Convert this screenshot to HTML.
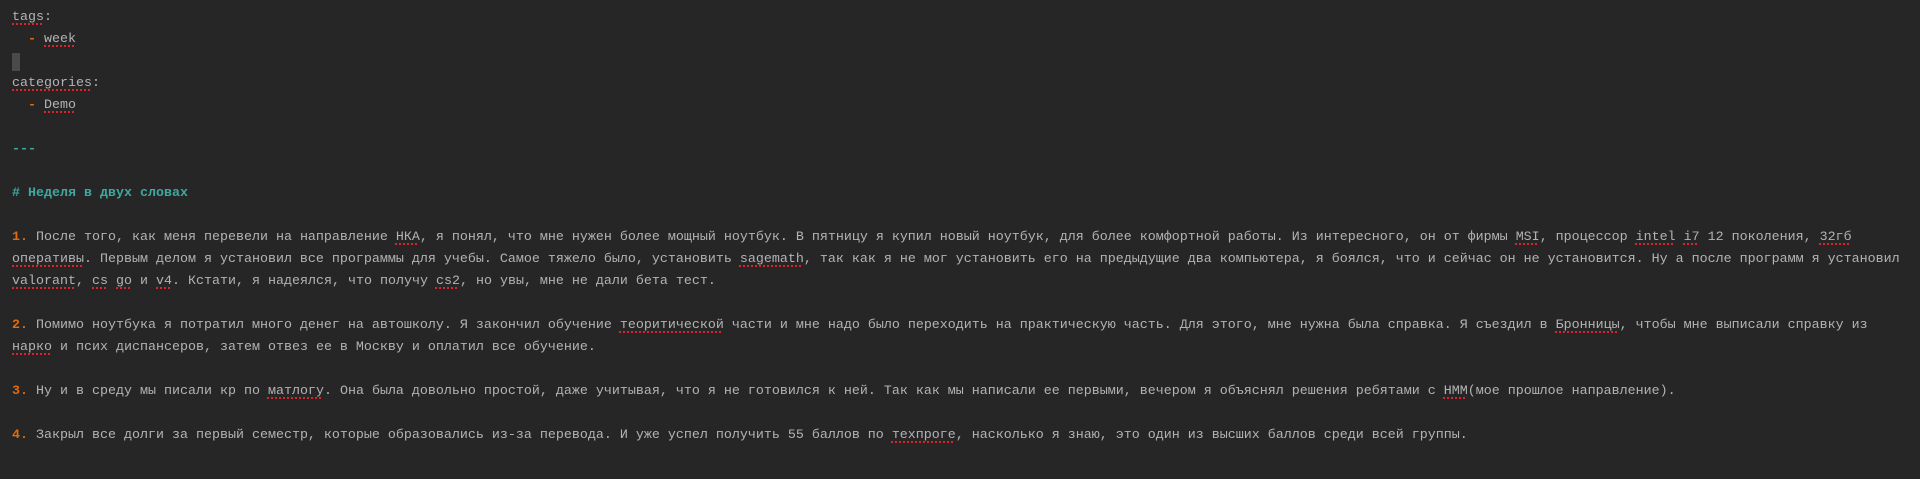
<!DOCTYPE html>
<html><head><meta charset="utf-8"><style>
html,body{margin:0;padding:0;background:#262626;width:1920px;height:479px;overflow:hidden}
pre{margin:0;padding:7px 0 0 12px;font-family:"Liberation Mono","DejaVu Sans Mono",monospace;font-size:13.333px;line-height:22px;color:#b3b3b3;white-space:pre}
.o{color:#e26a0a;font-weight:bold}
.t{color:#3ea8a0;font-weight:bold}
.s{text-decoration:underline dotted #e0202a;text-decoration-thickness:2px;text-underline-offset:3px}
.c{display:inline-block;width:8px;height:18px;margin-top:2px;background:#4a4a4a;vertical-align:top}
</style></head><body><pre><span class="s">tags</span>:
  <span class="o">-</span> <span class="s">week</span>
<span class="c"></span>
<span class="s">categories</span>:
  <span class="o">-</span> <span class="s">Demo</span>

<span class="t">---</span>

<span class="t"># Неделя в двух словах</span>

<span class="o">1.</span> После того, как меня перевели на направление <span class="s">НКА</span>, я понял, что мне нужен более мощный ноутбук. В пятницу я купил новый ноутбук, для более комфортной работы. Из интересного, он от фирмы <span class="s">MSI</span>, процессор <span class="s">intel</span> <span class="s">i7</span> 12 поколения, <span class="s">32гб</span>
<span class="s">оперативы</span>. Первым делом я установил все программы для учебы. Самое тяжело было, установить <span class="s">sagemath</span>, так как я не мог установить его на предыдущие два компьютера, я боялся, что и сейчас он не установится. Ну а после программ я установил
<span class="s">valorant</span>, <span class="s">cs</span> <span class="s">go</span> и <span class="s">v4</span>. Кстати, я надеялся, что получу <span class="s">cs2</span>, но увы, мне не дали бета тест.

<span class="o">2.</span> Помимо ноутбука я потратил много денег на автошколу. Я закончил обучение <span class="s">теоритической</span> части и мне надо было переходить на практическую часть. Для этого, мне нужна была справка. Я съездил в <span class="s">Бронницы</span>, чтобы мне выписали справку из
<span class="s">нарко</span> и псих диспансеров, затем отвез ее в Москву и оплатил все обучение.

<span class="o">3.</span> Ну и в среду мы писали кр по <span class="s">матлогу</span>. Она была довольно простой, даже учитывая, что я не готовился к ней. Так как мы написали ее первыми, вечером я объяснял решения ребятами с <span class="s">НММ</span>(мое прошлое направление).

<span class="o">4.</span> Закрыл все долги за первый семестр, которые образовались из-за перевода. И уже успел получить 55 баллов по <span class="s">техпроге</span>, насколько я знаю, это один из высших баллов среди всей группы.
</pre></body></html>
